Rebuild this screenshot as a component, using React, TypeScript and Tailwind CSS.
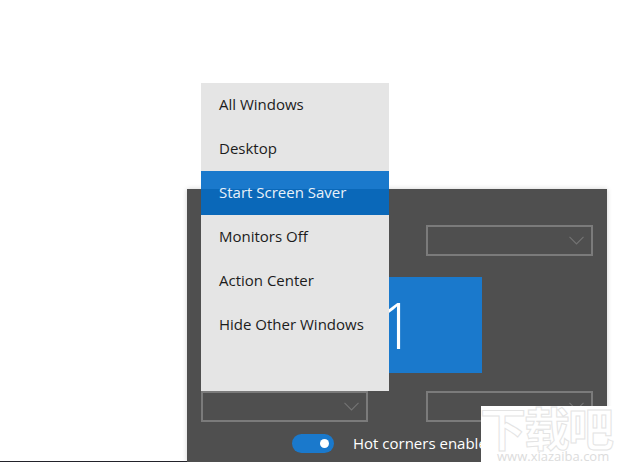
const font = { fontFamily: '"Open Sans", "Noto Sans CJK SC", sans-serif' };

const menuItems = [
  "All Windows",
  "Desktop",
  "Start Screen Saver",
  "Monitors Off",
  "Action Center",
  "Hide Other Windows",
];

const CornerSelect = () => (
  <div className="flex h-[31px] w-[167px] items-center justify-end border-2 border-[#7b7b7b] pr-[7px]">
    <svg width="15" height="9" viewBox="0 0 15 9" fill="none" className="text-[#737373]">
      <path d="M0.5 0.8 7.5 7.8 14.5 0.8" stroke="currentColor" strokeWidth="1.2" />
    </svg>
  </div>
);

export default function App() {
  return (
    <div
      className="relative h-[462px] w-[617px] overflow-hidden bg-white"
      style={font}
    >
      <div className="ml-[187px] flex h-[462px] w-[420px] flex-col pt-[189px]">
        <div className="flex flex-1 flex-col bg-[#4f4f4f] px-[14px] pt-9 shadow-[0_0_5px_rgba(0,0,0,0.18)]">
          <div className="flex justify-between">
            <CornerSelect />
            <CornerSelect />
          </div>
          <div className="mt-[21px] flex h-24 w-[170px] items-center justify-center self-center bg-[#1a79cc] text-[64px] font-light text-white">
            1
          </div>
          <div className="mt-[18px] flex justify-between">
            <CornerSelect />
            <CornerSelect />
          </div>
          <div className="mt-[10px] ml-[91px] flex items-center gap-[19px]">
            <div className="flex h-[19px] w-[42px] items-center justify-end rounded-full bg-[#1a79cc] pr-[5px]">
              <div className="size-[9px] rounded-full bg-white" />
            </div>
            <span className="whitespace-nowrap text-[15px] text-white">
              Hot corners enabled
            </span>
          </div>
        </div>
      </div>

      <div className="absolute bottom-0 left-0 h-px w-[187px] bg-[#22222a]" />

      <ul className="absolute top-[83px] left-[201px] h-[308px] w-[188px] bg-[#e5e5e5] text-[15px] text-[#1c1c1c]">
        {menuItems.map((item) => (
          <li
            key={item}
            className={
              item === "Start Screen Saver"
                ? "flex h-11 items-center bg-[linear-gradient(#1a79cc_18px,#0a68b9_18px)] pb-[2px] pl-[18px] text-[#e8f1fa]"
                : "flex h-11 items-center pb-[2px] pl-[18px]"
            }
          >
            {item}
          </li>
        ))}
      </ul>

      <div className="absolute top-[406px] left-[481px] flex h-14 w-[136px] flex-col overflow-hidden bg-white">
        <span className="-ml-[1px] h-[44px] text-[46px] leading-[44px] font-bold tracking-[-2px] whitespace-nowrap text-white [-webkit-text-stroke:1px_#e4e4e4]">
          下载吧
        </span>
        <span className="ml-[16px] h-3 text-[13px] leading-3 whitespace-nowrap text-[#dcdcdc]">
          www.xiazaiba.com
        </span>
      </div>
    </div>
  );
}
